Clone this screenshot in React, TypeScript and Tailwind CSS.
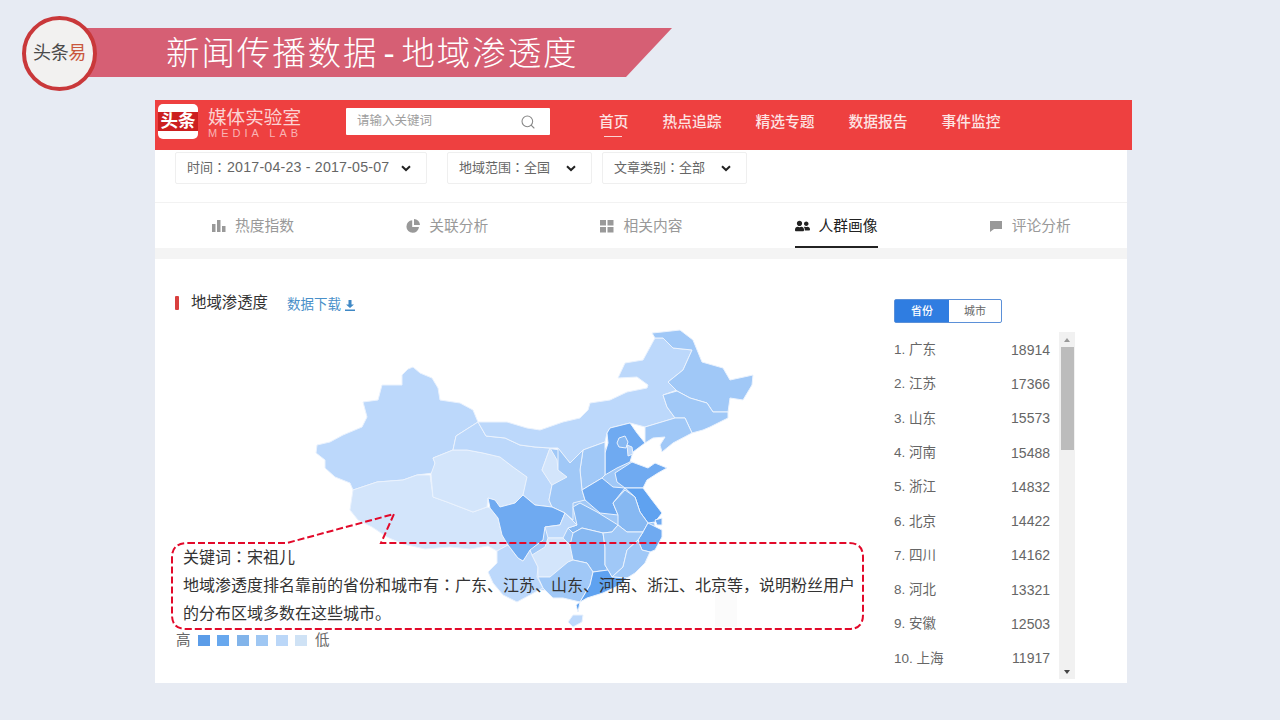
import { FaUserFriends } from "react-icons/fa"
import { Search } from "lucide-react"

const C1 = "#5fa2f0"
const C2 = "#6faaf1"
const C3 = "#86b8f2"
const C4 = "#a0c8f7"
const C5 = "#bcd8fb"
const C6 = "#d3e5fb"

const provinces: [string, string][] = [
  // base under the interior, closes the seams between provinces
  [C4, "490,440 560,450 600,445 632,462 640,490 655,525 645,560 610,585 560,590 520,590 500,560 495,510"],
  // xinjiang
  [C5, "413,367 408,369 402,375 402,385 382,385 378,400 363,402 367,417 362,427 343,435 330,442 317,445 316,453 325,460 325,468 335,477 350,483 353,490 377,482 403,480 417,475 433,473 435,463 433,458 453,450 456,436 478,422 473,410 460,403 440,400 438,388 432,378 420,373"],
  // xizang
  [C6, "353,490 377,482 403,480 417,475 430,475 433,497 447,502 473,512 487,507 490,508 498,518 502,535 508,545 497,551 488,546 470,549 450,547 425,549 403,544 387,537 372,527 358,520 350,510"],
  // qinghai
  [C6, "431,474 435,463 433,458 453,450 467,450 483,453 500,457 513,467 527,477 523,495 515,503 500,507 495,500 488,498 487,507 473,512 447,502 433,497"],
  // gansu
  [C5, "456,436 478,422 486,436 505,438 520,445 535,447 550,448 542,470 552,485 549,500 552,507 535,505 523,495 527,477 513,467 500,457 483,453 467,450 453,450"],
  // inner mongolia
  [C5, "478,422 507,422 527,428 540,430 563,422 580,418 588,410 590,403 610,400 627,392 647,388 648,385 637,377 618,378 625,363 643,360 655,338 663,338 673,348 692,350 683,370 668,382 677,390 663,395 667,407 675,418 645,427 630,423 610,428 607,433 605,442 583,450 570,463 558,448 550,448 535,447 520,445 505,438 486,436"],
  // heilongjiang
  [C4, "655,338 652,333 662,332 680,330 693,340 702,362 723,368 730,380 753,375 752,385 743,400 730,398 728,412 713,412 707,403 690,398 677,391 668,382 683,370 692,350 673,348 663,338"],
  // jilin
  [C4, "663,395 677,391 690,398 707,403 713,412 728,412 728,418 710,427 703,430 692,433 685,418 675,418 667,407"],
  // liaoning
  [C4, "645,427 675,418 685,418 692,433 673,443 662,452 660,445 665,437 653,438 645,443"],
  // hebei
  [C2, "610,428 630,423 637,433 645,443 633,452 630,462 617,468 605,475 605,453 608,443 607,433"],
  // beijing, tianjin
  [C3, "619,438 625,436 628,442 626,448 619,447 617,443"],
  [C5, "627,445 632,447 633,454 628,456"],
  // shanxi
  [C4, "583,450 605,442 605,475 602,478 582,490 580,470"],
  // ningxia
  [C6, "550,448 557,460 558,470 567,477 553,487 542,470"],
  // shaanxi
  [C4, "558,448 570,463 583,450 580,470 582,490 585,500 573,503 573,520 565,513 552,507 549,500 552,485 567,477 558,470"],
  // shandong
  [C2, "632,462 640,465 648,468 655,463 667,468 658,473 647,480 643,488 625,488 617,482 615,473"],
  // henan
  [C2, "582,490 602,478 613,487 625,488 613,503 618,515 600,513 585,500"],
  // jiangsu
  [C1, "625,488 643,488 652,500 662,513 655,522 648,523 640,512 635,497"],
  // anhui
  [C3, "613,503 625,490 635,497 640,512 648,523 643,532 627,532 618,525 618,515"],
  // shanghai
  [C2, "655,520 662,518 662,525 657,525"],
  // hubei
  [C3, "568,528 577,525 573,507 580,503 597,512 618,525 612,532 603,533 582,528 573,533"],
  // zhejiang
  [C2, "638,540 643,532 648,523 662,530 662,537 655,550 650,552 642,550"],
  // yunnan
  [C5, "508,545 518,558 523,561 530,550 532,555 538,567 537,577 543,588 530,595 517,602 503,595 493,583 488,572 497,563 497,551"],
  // sichuan
  [C2, "488,498 495,500 500,507 515,503 523,495 535,505 552,507 565,513 560,525 545,527 543,540 530,550 523,561 518,558 508,545 502,535 498,518 490,508"],
  // chongqing
  [C5, "565,513 577,525 568,528 563,538 548,538 545,527 560,525"],
  // guizhou
  [C6, "532,555 545,547 548,538 563,538 570,545 573,560 568,562 550,577 538,577 538,567"],
  // hunan
  [C3, "573,533 582,528 603,533 605,547 605,565 608,570 593,572 587,563 573,560 570,545"],
  // jiangxi
  [C4, "603,533 612,532 618,525 627,532 643,532 638,540 627,550 623,567 612,577 608,570 605,565 605,547"],
  // fujian
  [C4, "638,540 642,550 650,552 645,563 635,573 627,578 612,577 623,567 627,550"],
  // guangxi
  [C4, "538,577 550,577 568,562 573,560 587,563 593,572 590,585 580,602 563,598 553,598 543,588"],
  // guangdong
  [C1, "593,572 608,570 612,577 627,578 620,585 603,593 587,598 580,602 578,612 576,605 580,602 590,585"],
  // hainan
  [C5, "568,622 573,615 583,615 582,622 573,627"],
]

const tabs = [
  { label: "热度指数", icon: "bars" },
  { label: "关联分析", icon: "pie" },
  { label: "相关内容", icon: "grid" },
  { label: "人群画像", icon: "users", active: true },
  { label: "评论分析", icon: "chat" },
]

const ranks = [
  ["1. 广东", "18914"],
  ["2. 江苏", "17366"],
  ["3. 山东", "15573"],
  ["4. 河南", "15488"],
  ["5. 浙江", "14832"],
  ["6. 北京", "14422"],
  ["7. 四川", "14162"],
  ["8. 河北", "13321"],
  ["9. 安徽", "12503"],
  ["10. 上海", "11917"],
]

// the traditional-Chinese cut centres full-width punctuation, as the picture does
function Mid({ children }: { children: string }) {
  return <span className="font-['Noto_Sans_CJK_TC',sans-serif] leading-[0]">{children}</span>
}

function Chevron() {
  return (
    <svg width="10" height="7" viewBox="0 0 10 7" className="shrink-0">
      <path d="M1 1.2 L5 5 L9 1.2" fill="none" stroke="#222" strokeWidth="2" />
    </svg>
  )
}

function TabIcon({ name }: { name: string }) {
  if (name === "users") return <FaUserFriends className="w-[15px] h-[14px] text-[#222]" />
  return (
    <svg width="14" height="14" viewBox="0 0 14 14" fill="#999">
      {name === "bars" && (
        <path d="M0 5h3.5v8H0zM5 1h3.5v12H5zM10 7h3.5v6H10z" />
      )}
      {name === "pie" && (
        <path d="M6.2 1.2A6.3 6.3 0 1 0 13 8H6.2zM8 0v6h6A6.2 6.2 0 0 0 8 0z" />
      )}
      {name === "grid" && (
        <path d="M0 1h6v5.5H0zM7.5 1h6v5.5h-6zM0 8h6v5.5H0zM7.5 8h6v5.5h-6z" />
      )}
      {name === "chat" && <path d="M1 2h12v8H5l-4 3z" />}
    </svg>
  )
}

function Filter({ name, value }: { name: string; value: string }) {
  return (
    <div className="w-[145px] h-[32px] flex items-center justify-between pl-[11px] pr-[15px] bg-white border border-[#efefef] rounded-[2px] text-[#666]">
      <span className="text-[13px] whitespace-nowrap">
        {name}
        <Mid>：</Mid>
        {value}
      </span>
      <Chevron />
    </div>
  )
}

export default function App() {
  return (
    <div className="w-[1280px] h-[720px] overflow-hidden bg-[#e7ebf3] font-['Liberation_Sans','Noto_Sans_CJK_SC',sans-serif]">
      {/* slide title */}
      <div className="h-[100px] pl-[22px] pt-[16px] flex items-start">
        <div className="relative z-10 w-[75px] h-[75px] shrink-0 rounded-full border-[4px] border-[#c9383a] bg-[#f2f1f0] flex items-center justify-center text-[18px] text-[#4a4a4a] tracking-[-0.3px] whitespace-nowrap">
          头条<span className="text-[#c9573d]">易</span>
        </div>
        <div className="-ml-[10px] mt-[12px] w-[585px] h-[49px] pl-[79px] pt-[4px] flex items-center bg-[#d65f74] text-white text-[33.5px] font-light tracking-[1.9px] whitespace-nowrap [clip-path:polygon(0_0,100%_0,calc(100%-46px)_100%,0_100%)]">
          新闻传播数据<span className="px-[5px]">-</span>地域渗透度
        </div>
      </div>

      {/* site nav */}
      <div className="ml-[155px] w-[977px] h-[50px] pb-[7px] bg-[#ee4040] flex items-center">
        <div className="ml-[3px] w-[40px] h-[35px] rounded-[5px] bg-white flex items-center">
          <div className="w-full h-[19px] bg-[#cc1f1f] text-white text-[17.5px] font-bold leading-[19px] text-center whitespace-nowrap">
            头条
          </div>
        </div>
        <div className="ml-[10px] w-[100px] mt-[3px] text-[#fbd3d3]">
          <div className="text-[18.6px] leading-[21px] whitespace-nowrap">媒体实验室</div>
          <div className="text-[11px] leading-[11px] tracking-[4px] whitespace-nowrap text-[#f9b4b4]">MEDIA LAB</div>
        </div>
        <div className="ml-[38px] w-[204px] h-[27px] bg-white rounded-[1px] flex items-center justify-between pl-[11px] pr-[14px]">
          <span className="text-[12.5px] text-[#a0a0a0]">请输入关键词</span>
          <Search size={16} strokeWidth={1.6} className="text-[#888]" />
        </div>
        <div className="ml-[49px] mt-[2px] flex gap-[34px] text-[14.75px] font-medium text-[#fde3e3] whitespace-nowrap">
          <div className="relative">
            首页
            <div className="absolute left-[5px] -bottom-[3px] w-[18px] h-[1px] bg-[#fbd3d3]" />
          </div>
          <div>热点追踪</div>
          <div>精选专题</div>
          <div>数据报告</div>
          <div>事件监控</div>
        </div>
      </div>

      <div className="ml-[155px] w-[972px] h-[533px] bg-white">
        {/* filters */}
        <div className="h-[53px] pl-[20px] pt-[2px] flex gap-[20px] border-b border-[#f2f2f2]">
          <div className="w-[252px] h-[32px] flex items-center justify-between pl-[11px] pr-[15px] bg-white border border-[#efefef] rounded-[2px] text-[#666]">
            <span className="whitespace-nowrap text-[13px]">
              时间<Mid>：</Mid>
              <span className="ml-[1px] text-[14.2px] tracking-[0.2px]">2017-04-23 - 2017-05-07</span>
            </span>
            <Chevron />
          </div>
          <Filter name="地域范围" value="全国" />
          <div className="-ml-[10px]">
            <Filter name="文章类别" value="全部" />
          </div>
        </div>

        {/* tabs */}
        <div className="h-[45px] pl-[57px] flex">
          {tabs.map((t) => (
            <div key={t.label} className="w-[194.2px] shrink-0">
              <div className={`h-[45px] pt-[3px] w-fit flex items-center gap-[9px] border-b-2 ${t.active ? "border-[#222] text-[#222]" : "border-transparent text-[#999]"}`}>
                <TabIcon name={t.icon} />
                <span className="text-[14.75px] whitespace-nowrap">{t.label}</span>
              </div>
            </div>
          ))}
        </div>
        <div className="h-[11px] bg-[#f4f4f4]" />

        <div className="flex">
          {/* map column */}
          <div className="w-[739px] shrink-0">
            <div className="h-[61px] pt-[33px] pl-[20px] flex items-start">
              <div className="w-[4px] h-[14px] mt-[4px] bg-[#d9403f] rounded-[1px]" />
              <div className="ml-[12px] text-[15.4px] leading-[22px] text-[#333] whitespace-nowrap">地域渗透度</div>
              <div className="ml-[19px] mt-[2px] text-[#4a90c9] text-[13.5px] leading-[22px] whitespace-nowrap flex items-center gap-[4px]">
                数据下载
                <svg width="10" height="11" viewBox="0 0 10 11" fill="#3f88c5">
                  <path d="M3.5 0h3v4.5H9L5 8 1 4.5h2.5zM0 9.5h10V11H0z" />
                </svg>
              </div>
            </div>

            <div className="relative h-[312px]">
              <svg width="720" height="312" viewBox="155 320 720 312" className="block">
                <rect x="715" y="580" width="22" height="47" fill="#fbfbfb" />
                <g className="[filter:blur(0.5px)]">
                  {provinces.map(([fill, points], i) => (
                    <polygon key={i} points={points} fill={fill} stroke="#eaf2fd" strokeWidth="1" strokeLinejoin="round" />
                  ))}
                </g>
                <path
                  d="M188 543 H287 L394 514 L381 543 H849 Q863 543 863 557 V615 Q863 629 849 629 H186 Q172 629 172 615 V557 Q172 543 188 543 Z"
                  fill="none"
                  stroke="#e2092a"
                  strokeWidth="2"
                  strokeDasharray="7 3"
                />
              </svg>
              <div className="absolute left-[28px] top-[224px] w-[680px] text-[16px] leading-[28px] text-[#333]">
                <div>
                  关键词<Mid>：</Mid>宋祖儿
                </div>
                <div className="whitespace-nowrap">
                  地域渗透度排名靠前的省份和城市有<Mid>：</Mid>广东、江苏、山东、河南、浙江、北京等，说明粉丝用户
                </div>
                <div>的分布区域多数在这些城市。</div>
              </div>
            </div>

            <div className="pl-[21px] flex items-center text-[14.5px] leading-[16px] text-[#666]">
              <span>高</span>
              <div className="ml-[7px] flex gap-[7.5px]">
                <div className="w-[12px] h-[11px] bg-[#5b9ce8]" />
                <div className="w-[12px] h-[11px] bg-[#68a8ee]" />
                <div className="w-[12px] h-[11px] bg-[#82b4ea]" />
                <div className="w-[12px] h-[11px] bg-[#9fc7f3]" />
                <div className="w-[12px] h-[11px] bg-[#bbd7f8]" />
                <div className="w-[12px] h-[11px] bg-[#cfe2f5]" />
              </div>
              <span className="ml-[8px]">低</span>
            </div>
          </div>

          {/* province ranking */}
          <div className="pt-[40px]">
            <div className="w-[108px] h-[24px] flex rounded-[2px] border border-[#5b90d8] text-[11px] leading-[22px] text-center">
              <div className="w-[54px] bg-[#2f7de1] text-white font-medium">省份</div>
              <div className="flex-1 text-[#666]">城市</div>
            </div>
            <div className="mt-[9px] flex h-[347px]">
              <div className="w-[165px] pt-[1px]">
                {ranks.map(([name, value]) => (
                  <div key={name} className="h-[34.3px] flex items-center justify-between text-[13.5px] text-[#666]">
                    <span>{name}</span>
                    <span className="mr-[9px] text-[14px]">{value}</span>
                  </div>
                ))}
              </div>
              <div className="w-[16px] bg-[#f1f1f1] flex flex-col items-center">
                <div className="h-[15px] flex items-center justify-center">
                  <div className="w-0 h-0 border-x-[3.5px] border-x-transparent border-b-[4px] border-b-[#999]" />
                </div>
                <div className="w-[13px] h-[103px] bg-[#bcbcbc]" />
                <div className="mt-auto h-[14px] flex items-center justify-center">
                  <div className="w-0 h-0 border-x-[3.5px] border-x-transparent border-t-[4px] border-t-[#444]" />
                </div>
              </div>
            </div>
          </div>
        </div>
      </div>
    </div>
  )
}
